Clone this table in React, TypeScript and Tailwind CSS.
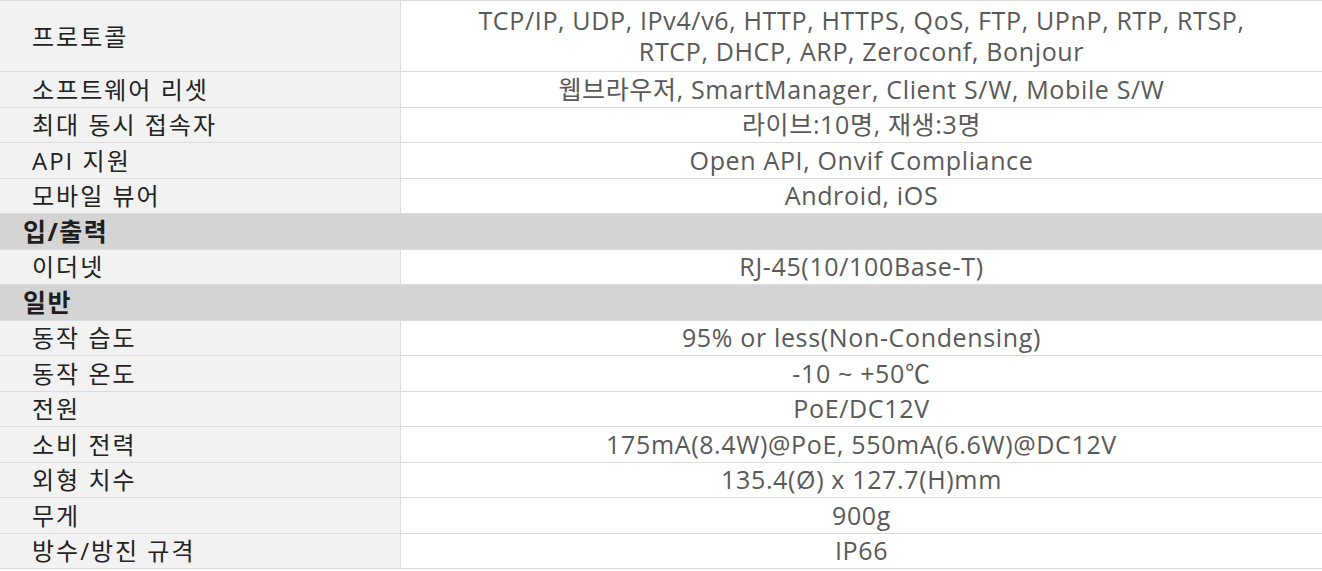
type Row = { label: string; value?: string[]; section?: boolean; tall?: boolean };

const rows: Row[] = [
  {
    label: '프로토콜',
    value: [
      'TCP/IP, UDP, IPv4/v6, HTTP, HTTPS, QoS, FTP, UPnP, RTP, RTSP,',
      'RTCP, DHCP, ARP, Zeroconf, Bonjour',
    ],
    tall: true,
  },
  { label: '소프트웨어 리셋', value: ['웹브라우저, SmartManager, Client S/W, Mobile S/W'] },
  { label: '최대 동시 접속자', value: ['라이브:10명, 재생:3명'] },
  { label: 'API 지원', value: ['Open API, Onvif Compliance'] },
  { label: '모바일 뷰어', value: ['Android, iOS'] },
  { label: '입/출력', section: true },
  { label: '이더넷', value: ['RJ-45(10/100Base-T)'] },
  { label: '일반', section: true },
  { label: '동작 습도', value: ['95% or less(Non-Condensing)'] },
  { label: '동작 온도', value: ['-10 ~ +50℃'] },
  { label: '전원', value: ['PoE/DC12V'] },
  { label: '소비 전력', value: ['175mA(8.4W)@PoE, 550mA(6.6W)@DC12V'] },
  { label: '외형 치수', value: ['135.4(Ø) x 127.7(H)mm'] },
  { label: '무게', value: ['900g'] },
  { label: '방수/방진 규격', value: ['IP66'] },
];

export default function App() {
  return (
    <div
      className="w-[1322px] h-[571px] bg-white overflow-hidden"
      style={{ fontFamily: '"Open Sans", "Noto Sans CJK KR", sans-serif' }}
    >
      <div className="border-t border-[#dcdcdc]">
        {rows.map((row) =>
          row.section ? (
            <div
              key={row.label}
              className="h-[35.5px] flex items-center bg-[#d4d4d4] border-b border-[#dcdcdc] pl-[23px] text-[25px] leading-[31px] tracking-[1.5px] font-bold text-[#1e1e1e]"
            >
              {row.label}
            </div>
          ) : (
            <div
              key={row.label}
              className={`flex border-b border-[#dcdcdc] ${row.tall ? 'h-[71px]' : 'h-[35.5px]'}`}
            >
              <div className="w-[401px] shrink-0 flex items-center bg-[#f2f2f2] border-r border-[#dcdcdc] pl-[32px] text-[24px] leading-[31px] tracking-[2px] text-[#222]">
                {row.label}
              </div>
              <div className="flex-1 flex flex-col items-center justify-center text-[25px] leading-[31px] tracking-[0.65px] text-[#595959]">
                {row.value?.map((line) => (
                  <div key={line}>{line}</div>
                ))}
              </div>
            </div>
          ),
        )}
      </div>
    </div>
  );
}
